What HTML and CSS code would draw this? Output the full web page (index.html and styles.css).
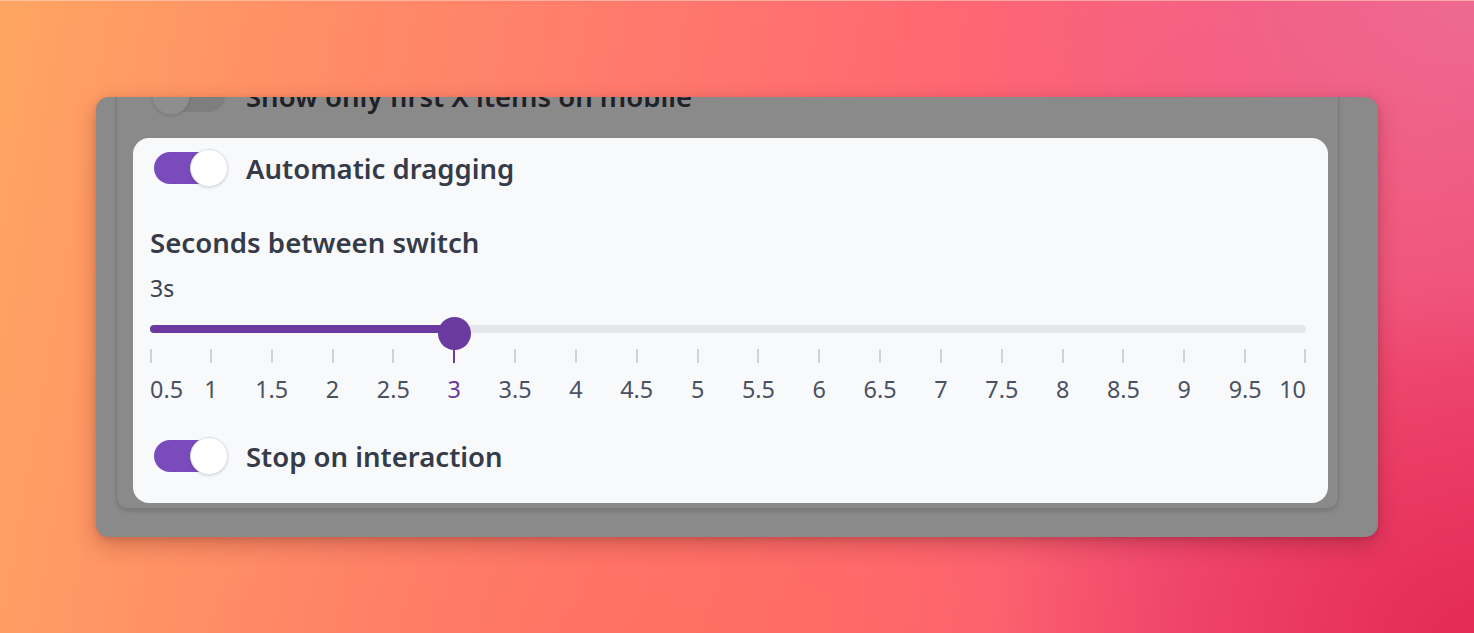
FILE: index.html
```html
<!DOCTYPE html>
<html lang="en">
<head>
<meta charset="utf-8">
<title>Carousel settings</title>
<link rel="stylesheet" href="styles.css">
</head>
<body>
<div class="stage">
  <div class="panel">
    <div class="inner">
      <div class="row dim">
        <span class="toggle off"><span class="track"></span><span class="knob"></span></span>
        <span class="label">Show only first X items on mobile</span>
      </div>
      <div class="card">
        <div class="row">
          <span class="toggle on"><span class="track"></span><span class="knob"></span></span>
          <span class="label">Automatic dragging</span>
        </div>
        <div class="field-title">Seconds between switch</div>
        <div class="value">3s</div>
        <div class="slider">
          <div class="track-area">
            <div class="rail"><div class="fill" style="width:26.32%"></div></div>
            <div class="thumb" style="left:26.32%"></div>
          </div>
          <div class="scale ticks">
            <span></span><span></span><span></span><span></span><span></span>
            <span class="sel"></span><span></span><span></span><span></span><span></span>
            <span></span><span></span><span></span><span></span><span></span>
            <span></span><span></span><span></span><span></span><span></span>
          </div>
          <div class="scale labels">
            <span>0.5</span><span>1</span><span>1.5</span><span>2</span><span>2.5</span>
            <span class="sel">3</span><span>3.5</span><span>4</span><span>4.5</span><span>5</span>
            <span>5.5</span><span>6</span><span>6.5</span><span>7</span><span>7.5</span>
            <span>8</span><span>8.5</span><span>9</span><span>9.5</span><span>10</span>
          </div>
        </div>
        <div class="row last">
          <span class="toggle on"><span class="track"></span><span class="knob"></span></span>
          <span class="label">Stop on interaction</span>
        </div>
      </div>
    </div>
  </div>
</div>
</body>
</html>
```
FILE: styles.css
```css
html, body {
  margin: 0;
  padding: 0;
}
body {
  width: 1474px;
  height: 633px;
  overflow: hidden;
  font-family: "Noto Sans", "Open Sans", sans-serif;
  border-top: 1px solid rgba(255, 210, 190, 0.6);
  box-sizing: border-box;
  background:
    radial-gradient(ellipse 520px 380px at 1474px 0px, rgba(238, 110, 150, 0.85), rgba(238, 110, 150, 0) 100%),
    radial-gradient(ellipse 480px 360px at 1474px 633px, rgba(228, 40, 85, 0.95), rgba(228, 40, 85, 0) 100%),
    radial-gradient(ellipse 500px 200px at 700px 633px, rgba(255, 110, 85, 0.5), rgba(255, 110, 85, 0) 100%),
    linear-gradient(100deg, #ffa562 0%, #ff9066 18%, #ff786d 42%, #ff6672 62%, #f75577 80%, #ee4c74 100%);
}
.stage {
  padding: 96px 0 0 96px;
}
.panel {
  width: 1282px;
  height: 440px;
  background: #8a8a8a;
  border-radius: 13px;
  overflow: hidden;
  box-shadow: 0 8px 22px rgba(90, 20, 20, 0.28), 0 2px 6px rgba(0, 0, 0, 0.12);
}
.inner {
  margin: -20px 40px 0 21px;
  padding: 0 10px 5px 16px;
  background: #8a8a8a;
  border-radius: 0 0 10px 10px;
  box-shadow: 0 3px 5px rgba(0, 0, 0, 0.14), -1px 0 0 rgba(0, 0, 0, 0.05), 1px 0 0 rgba(0, 0, 0, 0.05);
}
.row {
  display: flex;
  align-items: center;
  gap: 18px;
  height: 38px;
}
.row.dim {
  padding-left: 17px;
  margin-bottom: 23px;
}
.label {
  font-size: 27.5px;
  font-weight: 600;
  line-height: 38px;
  color: #353b48;
  white-space: nowrap;
  padding-top: 2px;
}
.dim .label {
  color: #1e2128;
}
.toggle {
  position: relative;
  width: 78px;
  height: 38px;
  flex: none;
}
.toggle .track {
  position: absolute;
  left: 4px;
  top: 3px;
  width: 64px;
  height: 32px;
  border-radius: 16px;
  background: #7a4bbd;
}
.toggle .knob {
  position: absolute;
  top: 0;
  left: 40px;
  width: 36px;
  height: 36px;
  border-radius: 50%;
  background: #ffffff;
  border: 1px solid #e1e2e6;
  box-shadow: 0 1px 3px rgba(0, 0, 0, 0.14);
}
.toggle.off .track {
  width: 71px;
  background: #7e7e7e;
}
.toggle.off .knob {
  left: 2px;
  background: #8e8e8e;
  border-color: #878787;
  box-shadow: 0 1px 3px rgba(0, 0, 0, 0.12);
}
.card {
  background: #f8f9fb;
  border-radius: 16px;
  padding: 11px 22px 28px 17px;
}
.field-title {
  margin-top: 36px;
  font-size: 27.6px;
  font-weight: 600;
  line-height: 38px;
  color: #353b48;
}
.value {
  margin-top: 11px;
  font-size: 23px;
  line-height: 33px;
  color: #3c4250;
}
.slider {
  margin-top: 12px;
}
.track-area {
  position: relative;
  height: 32px;
}
.rail {
  position: relative;
  top: 8px;
  height: 8px;
  border-radius: 4px;
  background: #e5e6ea;
}
.fill {
  height: 100%;
  border-radius: 4px;
  background: #6b3aa1;
}
.thumb {
  position: absolute;
  top: 0;
  width: 33px;
  height: 33px;
  margin-left: -16px;
  border-radius: 50%;
  background: #6b3aa1;
}
.scale {
  display: grid;
  grid-template-columns: minmax(0, 0.5fr) repeat(18, minmax(0, 1fr)) minmax(0, 0.5fr);
}
.scale > span {
  justify-self: center;
}
.scale > span:first-child {
  justify-self: start;
}
.scale > span:last-child {
  justify-self: end;
}
.ticks {
  height: 14px;
}
.ticks span {
  width: 2px;
  height: 14px;
  background: #d1d3d9;
}
.ticks span.sel {
  background: #6b3aa1;
}
.labels {
  margin-top: 10px;
  font-size: 23.4px;
  line-height: 33px;
  color: #4a5161;
}
.labels span {
  white-space: nowrap;
}
.labels span.sel {
  color: #6b3aa1;
}
.row.last {
  margin-top: 31px;
}
```
